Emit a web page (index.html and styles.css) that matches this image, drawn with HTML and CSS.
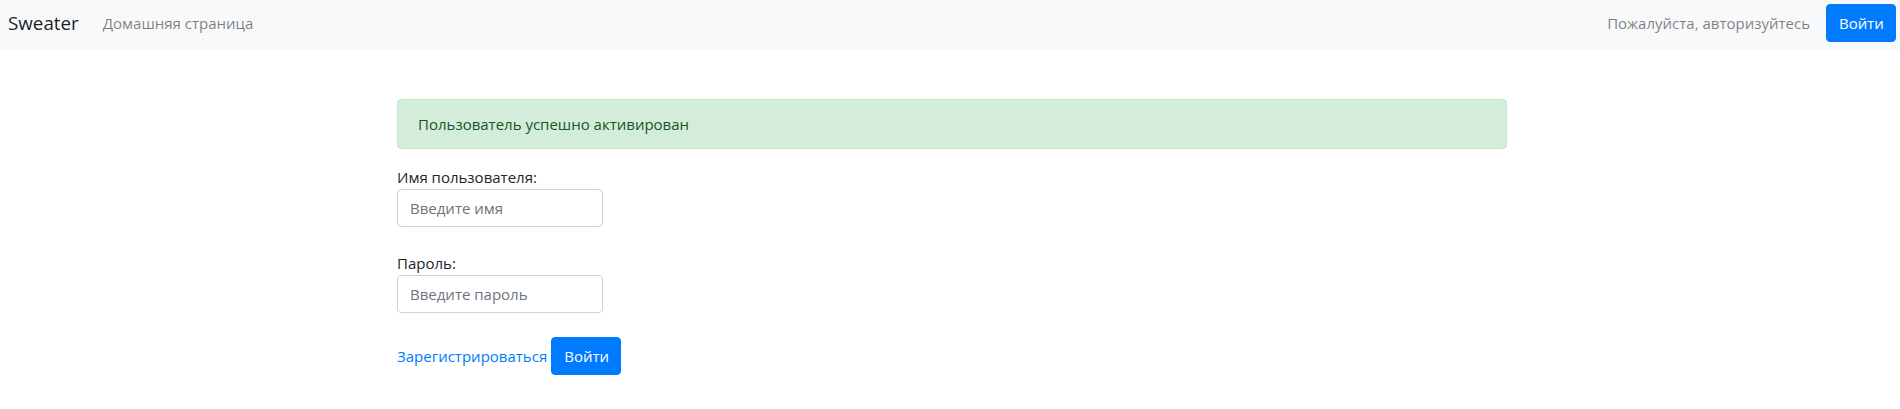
FILE: index.html
```html
<!DOCTYPE html>
<html lang="ru">
<head>
<meta charset="utf-8">
<title>Sweater</title>
<link rel="stylesheet" href="styles.css">
</head>
<body>
<nav class="navbar">
  <a class="brand" href="#">Sweater</a>
  <ul class="nav">
    <li><a class="nav-link" href="#">Домашняя страница</a></li>
  </ul>
  <div class="nav-right">
    <span class="navbar-text">Пожалуйста, авторизуйтесь</span>
    <button class="btn" type="button">Войти</button>
  </div>
</nav>
<main class="container">
  <div class="alert">Пользователь успешно активирован</div>
  <form class="login">
    <div class="group">
      <label for="u">Имя пользователя:</label>
      <input id="u" class="field" type="text" placeholder="Введите имя">
    </div>
    <div class="group">
      <label for="p">Пароль:</label>
      <input id="p" class="field" type="password" placeholder="Введите пароль">
    </div>
    <div class="actions">
      <a class="link" href="#">Зарегистрироваться</a>
      <button class="btn" type="submit">Войти</button>
    </div>
  </form>
</main>
</body>
</html>
```

FILE: styles.css
```css
* { box-sizing: border-box; }
html, body { margin: 0; padding: 0; }
body {
  font-family: "Open Sans", "Noto Sans", sans-serif;
  font-size: 15px;
  line-height: 24px;
  color: #212529;
  background: #fff;
}
.navbar {
  display: flex;
  align-items: center;
  height: 50px;
  padding: 4px 4px 8px 8px;
  background: #f8f9fa;
}
.brand {
  font-size: 18.8px;
  line-height: 30px;
  padding: 5px 0;
  margin-right: 16px;
  color: rgba(0,0,0,.9);
  text-decoration: none;
}
.nav {
  list-style: none;
  margin: 0;
  padding: 0;
  display: flex;
}
.nav-link {
  display: block;
  padding: 8px;
  color: rgba(0,0,0,.5);
  text-decoration: none;
}
.nav-right {
  margin-left: auto;
  display: flex;
  align-items: center;
}
.navbar-text {
  padding: 8px 0;
  margin-right: 16px;
  color: rgba(0,0,0,.5);
}
.btn {
  font-family: inherit;
  font-size: 15px;
  line-height: 24px;
  height: 38px;
  width: 70px;
  padding: 6px 12px;
  color: #fff;
  background: #007bff;
  border: 1px solid #007bff;
  border-radius: 4px;
  cursor: pointer;
}
.container {
  max-width: 1140px;
  margin: 0 auto;
  padding: 0 15px;
  position: relative;
  left: 2px;
}
.alert {
  margin-top: 49px;
  margin-bottom: 16px;
  padding: 12px 20px;
  color: #155724;
  background: #d4edda;
  border: 1px solid #c3e6cb;
  border-radius: 4px;
}
.group {
  display: flex;
  flex-direction: column;
  align-items: flex-start;
  margin-bottom: 24px;
}
.group label { display: block; }
.field {
  width: 206px;
  height: 38px;
  padding: 6px 12px;
  font-family: inherit;
  font-size: 15px;
  line-height: 24px;
  color: #495057;
  border: 1px solid #ced4da;
  border-radius: 4px;
  background: #fff;
}
.field::placeholder { color: #6c757d; opacity: 1; }
.actions {
  display: flex;
  align-items: center;
  gap: 4px;
}
.link {
  color: #007bff;
  text-decoration: none;
}
```
